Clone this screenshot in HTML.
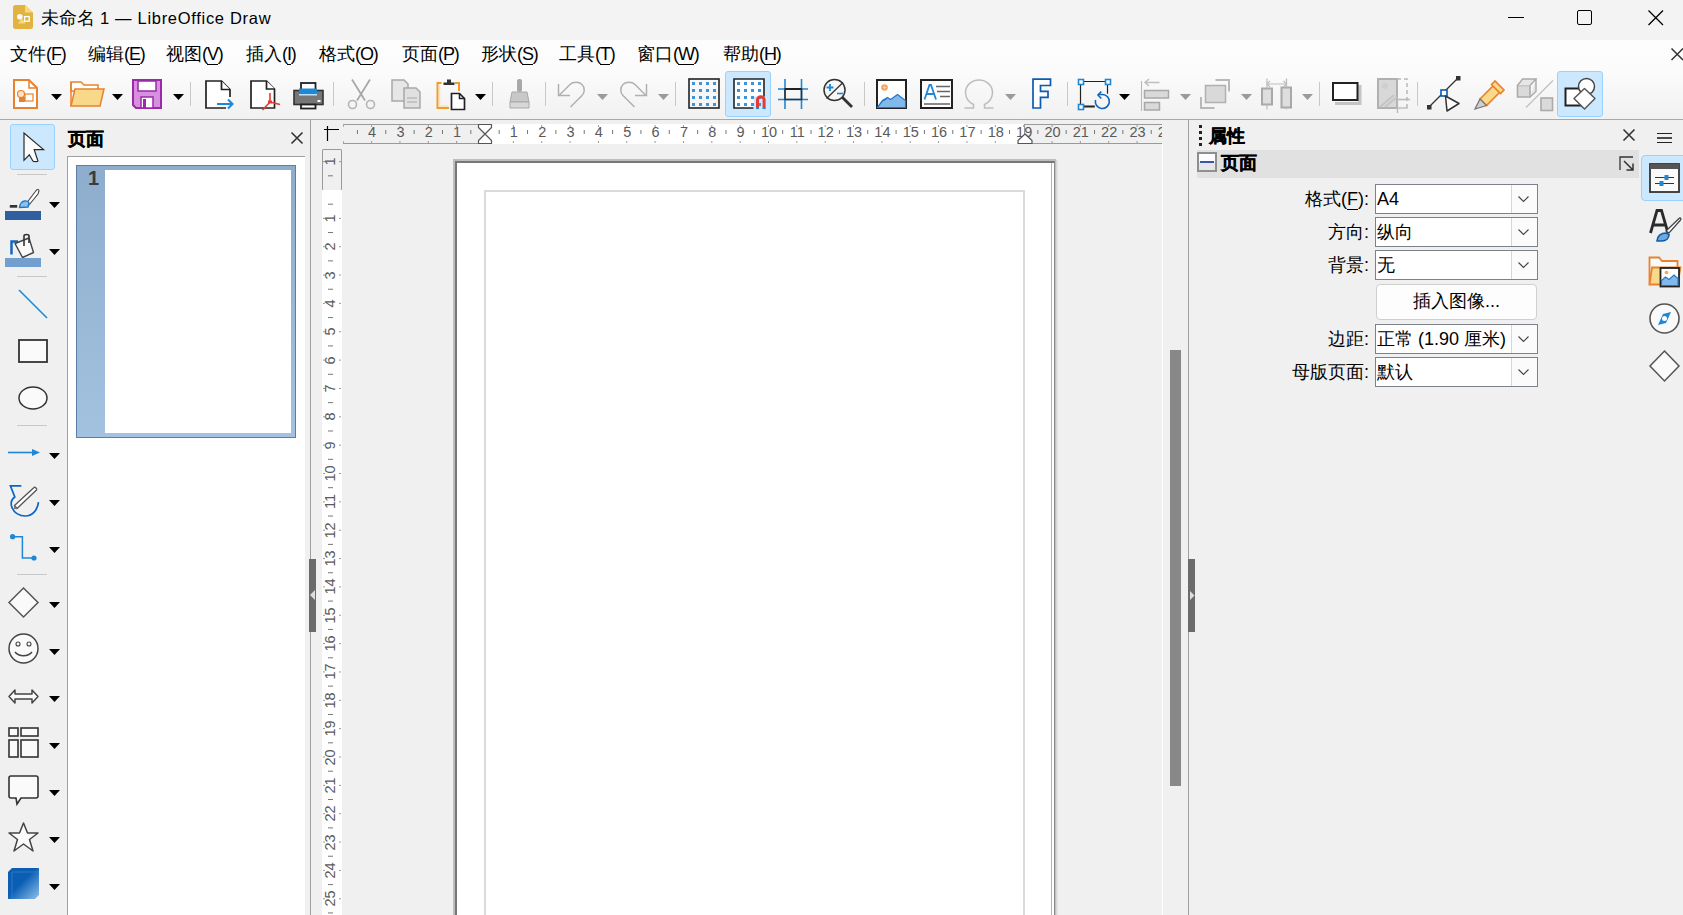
<!DOCTYPE html><html><head><meta charset="utf-8"><style>
*{margin:0;padding:0;box-sizing:border-box}
html,body{width:1683px;height:915px;overflow:hidden;background:#f0f0f0;font-family:"Liberation Sans",sans-serif;color:#000}
.a{position:absolute}
.t{white-space:nowrap;line-height:1}
svg{position:absolute;overflow:visible}
u{text-decoration:none;border-bottom:1px solid #000}
</style></head><body>
<div class="a" style="left:0px;top:0px;width:1683px;height:40px;background:#f3f3f3"></div>
<svg style="left:13px;top:5px" width="20" height="24" viewBox="0 0 20 24"><path d="M2.5 0h9.5l8 7.5v14a2.5 2.5 0 0 1-2.5 2.5h-15A2.5 2.5 0 0 1 0 21.5v-19A2.5 2.5 0 0 1 2.5 0z" fill="#e3b341"/><path d="M12 0v7.5h8z" fill="#f6d97c"/><circle cx="6.8" cy="11.8" r="2.8" fill="#fafafa"/><path d="M5 18.5l3.8-5.5 3.8 5.5z" fill="#f6d97c"/><rect x="11.6" y="11.6" width="4.6" height="4.6" fill="#e3b341" stroke="#fff" stroke-width="1.3"/></svg>
<div class="a t" style="left:41px;top:10px;font-size:17.5px">未命名 <span style="font-size:16.5px;letter-spacing:0.7px">1 — LibreOffice Draw</span></div>
<div class="a" style="left:1508px;top:17px;width:16px;height:1px;background:#000"></div>
<div class="a" style="left:1577px;top:10px;width:15px;height:15px;border:1.3px solid #000;border-radius:2px"></div>
<svg style="left:1648px;top:10px" width="16" height="16" viewBox="0 0 16 16"><path d="M0.5 0.5L15 15M15 0.5L0.5 15" stroke="#000" stroke-width="1.3"/></svg>
<div class="a" style="left:0px;top:40px;width:1683px;height:80px;background:linear-gradient(#fdfdfd 0px,#fbfbfb 32px,#f1f1f1 79px)"></div>
<div class="a" style="left:0px;top:119px;width:1683px;height:1px;background:#a8a8a8"></div>
<div class="a t" style="left:10px;top:45px;font-size:18px">文件<span style="font-size:18px;letter-spacing:-1.1px">(<u>F</u>)</span></div>
<div class="a t" style="left:88px;top:45px;font-size:18px">编辑<span style="font-size:18px;letter-spacing:-1.1px">(<u>E</u>)</span></div>
<div class="a t" style="left:166px;top:45px;font-size:18px">视图<span style="font-size:18px;letter-spacing:-1.1px">(<u>V</u>)</span></div>
<div class="a t" style="left:246px;top:45px;font-size:18px">插入<span style="font-size:18px;letter-spacing:-1.1px">(<u>I</u>)</span></div>
<div class="a t" style="left:319px;top:45px;font-size:18px">格式<span style="font-size:18px;letter-spacing:-1.1px">(<u>O</u>)</span></div>
<div class="a t" style="left:402px;top:45px;font-size:18px">页面<span style="font-size:18px;letter-spacing:-1.1px">(<u>P</u>)</span></div>
<div class="a t" style="left:481px;top:45px;font-size:18px">形状<span style="font-size:18px;letter-spacing:-1.1px">(<u>S</u>)</span></div>
<div class="a t" style="left:559px;top:45px;font-size:18px">工具<span style="font-size:18px;letter-spacing:-1.1px">(<u>T</u>)</span></div>
<div class="a t" style="left:637px;top:45px;font-size:18px">窗口<span style="font-size:18px;letter-spacing:-1.1px">(<u>W</u>)</span></div>
<div class="a t" style="left:723px;top:45px;font-size:18px">帮助<span style="font-size:18px;letter-spacing:-1.1px">(<u>H</u>)</span></div>
<svg style="left:1671px;top:48px" width="13" height="13" viewBox="0 0 13 13"><path d="M0.5 0.5L12 12M12 0.5L0.5 12" stroke="#333" stroke-width="1.5"/></svg>
<svg style="left:13px;top:79px" width="25" height="30" viewBox="0 0 25 30"><path d="M1 1h15l8 8v20H1z" fill="#fff" stroke="#e8822e" stroke-width="2"/><path d="M16 1v8h8" fill="none" stroke="#e8822e" stroke-width="1.5"/><circle cx="8" cy="15" r="3.5" fill="#fbe3cc" stroke="#e8822e" stroke-width="1.2"/><rect x="12" y="15" width="8" height="7" fill="#fff" stroke="#e8822e" stroke-width="1.2"/><path d="M6 18h6v5H6z" fill="#e8822e"/></svg>
<svg style="left:51px;top:94px" width="11" height="6" viewBox="0 0 11 6"><path d="M0 0h11L5.5 6z" fill="#000"/></svg>
<svg style="left:70px;top:81px" width="35" height="27" viewBox="0 0 35 27"><path d="M1 1h10l3 3h14v6H1z" fill="#fff" stroke="#e8822e" stroke-width="1.5"/><path d="M1 25L5 8h29l-4 17z" fill="#f8d98a" stroke="#e8822e" stroke-width="1.5"/><path d="M1 1v24" stroke="#e8822e" stroke-width="1.5"/></svg>
<svg style="left:112px;top:94px" width="11" height="6" viewBox="0 0 11 6"><path d="M0 0h11L5.5 6z" fill="#000"/></svg>
<svg style="left:132px;top:79px" width="30" height="30" viewBox="0 0 30 30"><path d="M1 1h28v28H4l-3-3z" fill="#d88fde" stroke="#9b2aa8" stroke-width="2"/><rect x="6" y="2" width="18" height="10" fill="#fff" stroke="#9b2aa8" stroke-width="1.5"/><rect x="9" y="18" width="12" height="11" fill="#fff" stroke="#9b2aa8" stroke-width="1.5"/><rect x="11" y="20" width="3" height="9" fill="#9b2aa8"/></svg>
<svg style="left:173px;top:94px" width="11" height="6" viewBox="0 0 11 6"><path d="M0 0h11L5.5 6z" fill="#000"/></svg>
<div class="a" style="left:190px;top:82px;width:1px;height:24px;background:#c8c8c8"></div>
<svg style="left:205px;top:80px" width="30" height="30" viewBox="0 0 30 30"><path d="M21 28H1V1h15.5l8.5 8.5V17" fill="#fff" stroke="#222" stroke-width="1.7"/><path d="M16.5 1v8.5H25" fill="#fff" stroke="#222" stroke-width="1.7"/><path d="M12 24h14" stroke="#1e88d6" stroke-width="2"/><path d="M23 19.5l4.5 4.5-4.5 4.5" fill="none" stroke="#1e88d6" stroke-width="2"/></svg>
<svg style="left:250px;top:80px" width="32" height="32" viewBox="0 0 32 32"><path d="M1 1h15.5l8 8v19H1z" fill="#fff" stroke="#222" stroke-width="1.7"/><path d="M16.5 1v8H25" fill="#fff" stroke="#222" stroke-width="1.7"/><path d="M20 13v9M20 22l10 2.5M20 22l-7.5 8" fill="none" stroke="#e53935" stroke-width="1.6"/><path d="M18 20.5h4v3h-4z" fill="#e53935"/></svg>
<svg style="left:293px;top:82px" width="31" height="27" viewBox="0 0 31 27"><rect x="8" y="1" width="14.5" height="9" fill="#fff" stroke="#222" stroke-width="1.8"/><rect x="1" y="8.5" width="29" height="14" fill="#777" stroke="#333" stroke-width="1.6"/><rect x="6" y="6.5" width="18" height="5.5" fill="#1e88d6"/><rect x="6" y="12" width="18" height="1.5" fill="#bfe0f7"/><rect x="8" y="22.5" width="14.5" height="4" fill="#fff" stroke="#222" stroke-width="1.8"/><rect x="24.5" y="18" width="3" height="2" fill="#fff"/></svg>
<div class="a" style="left:333px;top:82px;width:1px;height:24px;background:#c8c8c8"></div>
<svg style="left:347px;top:79px" width="29" height="30" viewBox="0 0 29 30"><path d="M5 0.5l13 21M23 0.5L10 21.5" stroke="#a8a8a8" stroke-width="1.8" fill="none"/><circle cx="5.5" cy="25.5" r="4" fill="none" stroke="#b4b4b4" stroke-width="1.6"/><circle cx="23.5" cy="25.5" r="4" fill="none" stroke="#b4b4b4" stroke-width="1.6"/></svg>
<svg style="left:391px;top:79px" width="30" height="30" viewBox="0 0 30 30"><path d="M1 1h12l4 4v17H1z" fill="#e6e6e6" stroke="#a8a8a8" stroke-width="1.5"/><path d="M13 9h12l4 4v16H13z" fill="#e0e0e0" stroke="#a8a8a8" stroke-width="1.5"/><path d="M16 19h10M16 23h10" stroke="#a8a8a8" stroke-width="1.2"/></svg>
<svg style="left:436px;top:78px" width="31" height="33" viewBox="0 0 31 33"><path d="M1.5 26V5h4" fill="none" stroke="#f29b2a" stroke-width="2"/><path d="M1.5 26v4h11.5" fill="none" stroke="#f29b2a" stroke-width="2"/><path d="M3.5 7v21h9" fill="none" stroke="#fbe3b0" stroke-width="1.5"/><path d="M19 5h4v8" fill="none" stroke="#f29b2a" stroke-width="2"/><path d="M7.5 7h11v-2.5h-3.5v-3h-4v3H7.5z" fill="#333"/><path d="M15.5 15.5h8l5 5v11h-13z" fill="#fff" stroke="#222" stroke-width="1.7"/><path d="M23.5 15.5v5h5" fill="none" stroke="#222" stroke-width="1.5"/></svg>
<svg style="left:475px;top:94px" width="11" height="6" viewBox="0 0 11 6"><path d="M0 0h11L5.5 6z" fill="#000"/></svg>
<div class="a" style="left:492px;top:82px;width:1px;height:24px;background:#c8c8c8"></div>
<svg style="left:508px;top:78px" width="23" height="31" viewBox="0 0 23 31"><rect x="9" y="1" width="5" height="13" rx="2" fill="#a8a8a8"/><path d="M4 14h15l2 10H2z" fill="#c8c8c8" stroke="#a8a8a8"/><path d="M2 24h19v6H2z" fill="#d8d8d8" stroke="#a8a8a8"/></svg>
<div class="a" style="left:545px;top:82px;width:1px;height:24px;background:#c8c8c8"></div>
<svg style="left:557px;top:81px" width="29" height="27" viewBox="0 0 29 27"><path d="M1.5 3v11.5h11.5M2 14.5L13 3.5c3-3 9-3 12 0s3 8 0 11L13.5 26" fill="none" stroke="#b0b0b0" stroke-width="1.5"/></svg>
<svg style="left:597px;top:94px" width="11" height="6" viewBox="0 0 11 6"><path d="M0 0h11L5.5 6z" fill="#9a9a9a"/></svg>
<svg style="left:619px;top:81px" width="29" height="27" viewBox="0 0 29 27"><path d="M27.5 3v11.5H16M27 14.5L16 3.5c-3-3-9-3-12 0s-3 8 0 11L15.5 26" fill="none" stroke="#b0b0b0" stroke-width="1.5"/></svg>
<svg style="left:658px;top:94px" width="11" height="6" viewBox="0 0 11 6"><path d="M0 0h11L5.5 6z" fill="#9a9a9a"/></svg>
<div class="a" style="left:675px;top:82px;width:1px;height:24px;background:#c8c8c8"></div>
<svg style="left:688px;top:78px" width="32" height="31" viewBox="0 0 32 31"><rect x="1" y="1" width="30" height="29" fill="none" stroke="#222" stroke-width="1.6"/><rect x="4" y="4" width="3" height="3" fill="#3c95d8"/><rect x="4" y="11" width="3" height="3" fill="#3c95d8"/><rect x="4" y="18" width="3" height="3" fill="#3c95d8"/><rect x="4" y="25" width="3" height="3" fill="#3c95d8"/><rect x="11" y="4" width="3" height="3" fill="#3c95d8"/><rect x="11" y="11" width="3" height="3" fill="#3c95d8"/><rect x="11" y="18" width="3" height="3" fill="#3c95d8"/><rect x="11" y="25" width="3" height="3" fill="#3c95d8"/><rect x="18" y="4" width="3" height="3" fill="#3c95d8"/><rect x="18" y="11" width="3" height="3" fill="#3c95d8"/><rect x="18" y="18" width="3" height="3" fill="#3c95d8"/><rect x="18" y="25" width="3" height="3" fill="#3c95d8"/><rect x="25" y="4" width="3" height="3" fill="#3c95d8"/><rect x="25" y="11" width="3" height="3" fill="#3c95d8"/><rect x="25" y="18" width="3" height="3" fill="#3c95d8"/><rect x="25" y="25" width="3" height="3" fill="#3c95d8"/></svg>
<div class="a" style="left:725px;top:71px;width:46px;height:46px;background:#cce8ff;border:1px solid #99d1ff;border-radius:3px"></div>
<svg style="left:733px;top:78px" width="33" height="32" viewBox="0 0 33 32"><path d="M1 1h30v17.5H21V30H1z" fill="#fff"/><path d="M31 18.5V1H1v29h19.5" fill="none" stroke="#222" stroke-width="1.6"/><rect x="4" y="4" width="3" height="3" fill="#3c95d8"/><rect x="4" y="11" width="3" height="3" fill="#3c95d8"/><rect x="4" y="18" width="3" height="3" fill="#3c95d8"/><rect x="4" y="25" width="3" height="3" fill="#3c95d8"/><rect x="11" y="4" width="3" height="3" fill="#3c95d8"/><rect x="11" y="11" width="3" height="3" fill="#3c95d8"/><rect x="11" y="18" width="3" height="3" fill="#3c95d8"/><rect x="11" y="25" width="3" height="3" fill="#3c95d8"/><rect x="18" y="4" width="3" height="3" fill="#3c95d8"/><rect x="18" y="11" width="3" height="3" fill="#3c95d8"/><rect x="18" y="18" width="3" height="3" fill="#3c95d8"/><rect x="18" y="25" width="3" height="3" fill="#3c95d8"/><rect x="25" y="4" width="3" height="3" fill="#3c95d8"/><rect x="25" y="11" width="3" height="3" fill="#3c95d8"/><rect x="25" y="18" width="3" height="3" fill="#3c95d8"/><rect x="25" y="25" width="3" height="3" fill="#3c95d8"/><path d="M1 1h0" stroke="none"/><path d="M24.5 30v-8a3.3 3.3 0 0 1 6.6 0v8" fill="none" stroke="#e53935" stroke-width="3"/><rect x="23" y="29.5" width="3" height="1.5" fill="#1e88d6"/><rect x="29.6" y="29.5" width="3" height="1.5" fill="#1e88d6"/></svg>
<svg style="left:778px;top:78px" width="31" height="32" viewBox="0 0 31 32"><path d="M7 1v30M23.5 1v30" stroke="#1e88d6" stroke-width="1.6"/><path d="M0 11h30M0 21.5h30" stroke="#1e88d6" stroke-width="1.6"/><path d="M7 11h16.5v10.5H7z" fill="none" stroke="#333" stroke-width="1.6"/><path d="M7 11h16.5" stroke="#222" stroke-width="2"/></svg>
<svg style="left:823px;top:78px" width="31" height="31" viewBox="0 0 31 31"><circle cx="11.5" cy="12" r="10.5" fill="none" stroke="#333" stroke-width="1.5"/><path d="M3.5 20.5L20 4.5" stroke="#333" stroke-width="1.3"/><path d="M3.5 9.5h7M7 6v7" stroke="#1e88d6" stroke-width="1.8"/><path d="M14 15.5h6" stroke="#1e88d6" stroke-width="1.6"/><path d="M19 19l10 10" stroke="#333" stroke-width="2.8"/></svg>
<div class="a" style="left:864px;top:82px;width:1px;height:24px;background:#c8c8c8"></div>
<svg style="left:876px;top:79px" width="31" height="30" viewBox="0 0 31 30"><rect x="1" y="1" width="29" height="28" fill="#fff" stroke="#222" stroke-width="2"/><path d="M1.5 28.5l5-7 5-3 3 2 7-5 8 6v7z" fill="#82b8ea" stroke="#1e78c8" stroke-width="1.1"/><path d="M1.5 28l5-6 4-2" fill="none" stroke="#1e78c8" stroke-width="1.1"/><circle cx="8.5" cy="8.5" r="3.3" fill="#f6a35b"/><path d="M8.5 6.5v4M6.5 8.5h4" stroke="#fbd3a8" stroke-width="0.8"/></svg>
<svg style="left:920px;top:79px" width="33" height="30" viewBox="0 0 33 30"><rect x="1" y="1" width="31" height="28" fill="#fff" stroke="#222" stroke-width="2"/><path d="M4.5 20.5L9.5 6h1.5l5 14.5M6.5 15h7.5" fill="none" stroke="#1e88d6" stroke-width="1.8"/><path d="M16 7.5h14M17 12.5h13M20 17.5h10M4 25h26" stroke="#666" stroke-width="1.6"/></svg>
<svg style="left:964px;top:79px" width="30" height="30" viewBox="0 0 30 30"><path d="M0.5 29h9v-3.5C4.5 23 1.5 18.5 1.5 13.5 1.5 6.5 7.5 1 15 1s13.5 5.5 13.5 12.5c0 5-3 9.5-8 12V29h9" fill="none" stroke="#bdbdbd" stroke-width="1.5"/></svg>
<svg style="left:1005px;top:94px" width="11" height="6" viewBox="0 0 11 6"><path d="M0 0h11L5.5 6z" fill="#9a9a9a"/></svg>
<svg style="left:1032px;top:78px" width="20" height="32" viewBox="0 0 20 32"><path d="M1 1.2h17.5v6.3H8.5v5.8h7.5v6H8.5v10.7H1z" fill="#fff" stroke="#0b5cb0" stroke-width="1.7"/></svg>
<div class="a" style="left:1067px;top:82px;width:1px;height:24px;background:#c8c8c8"></div>
<svg style="left:1078px;top:79px" width="33" height="31" viewBox="0 0 33 31"><path d="M29.5 14.7V2.5H2.5v24.5" fill="none" stroke="#222" stroke-width="1.2"/><path d="M2.5 27.5h14.3" stroke="#222" stroke-width="2"/><path d="M17.5 21A7 7 0 1 0 24.5 15.5H20.5" fill="none" stroke="#0b66c2" stroke-width="1.6"/><path d="M23.3 12.5L20 16l3.3 3.5" fill="none" stroke="#0b66c2" stroke-width="1.6"/><rect x="0.5" y="0.5" width="5" height="5" fill="#fff" stroke="#1e88d6" stroke-width="1.6"/><rect x="27.5" y="0.5" width="5" height="5" fill="#fff" stroke="#1e88d6" stroke-width="1.6"/><rect x="0.5" y="25.5" width="5" height="5" fill="#fff" stroke="#1e88d6" stroke-width="1.6"/></svg>
<svg style="left:1119px;top:94px" width="11" height="6" viewBox="0 0 11 6"><path d="M0 0h11L5.5 6z" fill="#000"/></svg>
<svg style="left:1141px;top:78px" width="29" height="33" viewBox="0 0 29 33"><path d="M0.5 3v30" stroke="#b8b8b8" stroke-width="1.1"/><path d="M4 4.5h14.5M8 1L4 4.5 8 8" fill="none" stroke="#c0c0c0" stroke-width="1.6"/><rect x="3.5" y="12.5" width="24" height="7.5" fill="#d9d9d9" stroke="#a8a8a8" stroke-width="1.5"/><rect x="3.5" y="24.5" width="15" height="7.5" fill="#d9d9d9" stroke="#a8a8a8" stroke-width="1.5"/></svg>
<svg style="left:1180px;top:94px" width="11" height="6" viewBox="0 0 11 6"><path d="M0 0h11L5.5 6z" fill="#9a9a9a"/></svg>
<svg style="left:1200px;top:79px" width="31" height="30" viewBox="0 0 31 30"><path d="M15.5 1h13.5v11.5" fill="none" stroke="#b8b8b8" stroke-width="2"/><path d="M1 18v11h13.5" fill="none" stroke="#b8b8b8" stroke-width="2"/><rect x="5.5" y="6.5" width="20" height="17" fill="#d9d9d9" stroke="#b0b0b0" stroke-width="1.5"/></svg>
<svg style="left:1241px;top:94px" width="11" height="6" viewBox="0 0 11 6"><path d="M0 0h11L5.5 6z" fill="#9a9a9a"/></svg>
<svg style="left:1261px;top:77px" width="31" height="33" viewBox="0 0 31 33"><rect x="1" y="11.5" width="10" height="16" fill="#dedede" stroke="#a8a8a8" stroke-width="2"/><rect x="20.5" y="10.5" width="9.5" height="20" fill="#dedede" stroke="#a8a8a8" stroke-width="2"/><path d="M6 1.5v10M25.5 1.5v9M6 27.5v5M25.5 30.5v2M6 7h19.5" stroke="#bbb" stroke-width="1.2"/><path d="M9 4L6 7l3 3M22.5 4l3 3-3 3" fill="none" stroke="#bbb" stroke-width="1.1"/></svg>
<svg style="left:1302px;top:94px" width="11" height="6" viewBox="0 0 11 6"><path d="M0 0h11L5.5 6z" fill="#9a9a9a"/></svg>
<div class="a" style="left:1319px;top:82px;width:1px;height:24px;background:#c8c8c8"></div>
<svg style="left:1332px;top:82px" width="31" height="23" viewBox="0 0 31 23"><path d="M26 3h3.5v20H3v-3h23z" fill="#c4c4c4"/><rect x="1" y="1" width="24.5" height="17" fill="#fff" stroke="#222" stroke-width="2"/></svg>
<svg style="left:1377px;top:78px" width="34" height="35" viewBox="0 0 34 35"><rect x="1" y="1" width="19" height="29" fill="#d8d8d8" stroke="#b0b0b0" stroke-width="2"/><path d="M20 1h10v29" fill="none" stroke="#b8b8b8" stroke-width="1.5" stroke-dasharray="4 3"/><circle cx="8" cy="8" r="3" fill="#cfcfcf"/><path d="M3 29l14-12M8 29l12-10" stroke="#c4c4c4" stroke-width="2"/><path d="M20 21.5h13M20.5 21v14" stroke="#b8b8b8" stroke-width="1.3"/><path d="M20.5 30h10" stroke="#b8b8b8" stroke-width="1.3"/></svg>
<div class="a" style="left:1417px;top:82px;width:1px;height:24px;background:#c8c8c8"></div>
<svg style="left:1427px;top:76px" width="34" height="37" viewBox="0 0 34 37"><path d="M2 31L31 2" stroke="#333" stroke-width="1.3"/><rect x="0" y="29" width="4.5" height="4.5" fill="#333"/><rect x="29" y="0" width="4.5" height="4.5" fill="#333"/><rect x="14" y="14" width="6" height="6" fill="#fff" stroke="#0b5cb0" stroke-width="1.6"/><path d="M18.5 20l1.5 15 12-7.5z" fill="#fff" stroke="#333" stroke-width="1.5" stroke-linejoin="round"/></svg>
<svg style="left:1474px;top:78px" width="32" height="33" viewBox="0 0 32 33"><path d="M6 21L19 8l6.5 6.5-13 13z" fill="#f8d98a" stroke="#e8822e" stroke-width="1.6"/><path d="M17.5 6.5l3.5-3.5 9 9-3.5 3.5z" fill="#f8d98a" stroke="#e8822e" stroke-width="1.6"/><path d="M6 21l-5 10 11.5-3.5z" fill="#cfcfcf" stroke="#777" stroke-width="1.3"/></svg>
<svg style="left:1516px;top:78px" width="38" height="34" viewBox="0 0 38 34"><path d="M1.5 7.5h12.5v11.5H1.5z" fill="#dadada" stroke="#aaa" stroke-width="1.6"/><path d="M1.5 7.5l5-6.5h13.5l-6 6.5M14 19l6-5.5V1" fill="#e6e6e6" stroke="#aaa" stroke-width="1.4"/><path d="M10 29.5L37 2.5" stroke="#c0c0c0" stroke-width="1.3"/><rect x="25" y="20" width="11.5" height="12.5" fill="#dadada" stroke="#aaa" stroke-width="1.6"/></svg>
<div class="a" style="left:1557px;top:71px;width:46px;height:46px;background:#cce8ff;border:1px solid #99d1ff;border-radius:3px"></div>
<svg style="left:1564px;top:78px" width="32" height="32" viewBox="0 0 32 32"><rect x="1.5" y="10.5" width="16" height="17" fill="#fff" stroke="#222" stroke-width="2"/><circle cx="22.5" cy="8.5" r="8" fill="#fff" stroke="#444" stroke-width="1.5"/><path d="M20.5 10.5l10.5 10-10.5 10.5-10.5-10.5z" fill="#fff" stroke="#555" stroke-width="1.5" stroke-linejoin="round"/></svg>
<div class="a" style="left:10px;top:124px;width:45px;height:46px;background:#cce8ff;border:1px solid #99d1ff;border-radius:3px"></div>
<svg style="left:23px;top:132px" width="22" height="31" viewBox="0 0 22 31"><path d="M1 1V28.3L6.3 22.8 10 29.2c0.5 0.6 4.5 0.6 5 0L11.2 17.6H20.6z" fill="#fbfbfb" stroke="#2a2a2a" stroke-width="1.2"/></svg>
<div class="a" style="left:17px;top:174px;width:30px;height:1px;background:#c8c8c8"></div>
<svg style="left:5px;top:188px" width="36" height="32" viewBox="0 0 36 32"><rect x="4.8" y="17" width="7.4" height="2.7" fill="#333"/><path d="M22 14.5L31.5 2c1-1 2.5-0.5 2.5 1l-1 3-9 11z" fill="#fff" stroke="#444" stroke-width="1.1"/><path d="M14.5 19.5c0-3 2-6 5-6.5 2-0.3 4 0.5 4.5 2l-1 4z" fill="#8fc0ea" stroke="#1e78c8" stroke-width="1.4"/><rect x="0" y="23" width="36" height="9" fill="#2f5f9f"/></svg>
<svg style="left:49px;top:202px" width="11" height="6" viewBox="0 0 11 6"><path d="M0 0h11L5.5 6z" fill="#000"/></svg>
<svg style="left:5px;top:233px" width="36" height="34" viewBox="0 0 36 34"><path d="M6.5 21.5V8.5h6.5" fill="none" stroke="#1565c0" stroke-width="2.5"/><path d="M10 10.5l14-5.5 4.5 14.5-11 5z" fill="#fafafa" stroke="#444" stroke-width="1.4" stroke-linejoin="round"/><path d="M19 13V3c0-2 5-2 5 0v7" fill="none" stroke="#333" stroke-width="1.6"/><rect x="0" y="25" width="36" height="9" fill="#729fcf"/></svg>
<svg style="left:49px;top:249px" width="11" height="6" viewBox="0 0 11 6"><path d="M0 0h11L5.5 6z" fill="#000"/></svg>
<div class="a" style="left:17px;top:276px;width:30px;height:1px;background:#c8c8c8"></div>
<svg style="left:18px;top:289px" width="30" height="30" viewBox="0 0 30 30"><path d="M1 1L29 29" stroke="#1e88d6" stroke-width="1.6"/></svg>
<svg style="left:18px;top:339px" width="30" height="24" viewBox="0 0 30 24"><rect x="1" y="1" width="28" height="22" fill="#fafafa" stroke="#333" stroke-width="1.8"/></svg>
<svg style="left:18px;top:386px" width="30" height="24" viewBox="0 0 30 24"><ellipse cx="15" cy="12" rx="14" ry="11" fill="#fafafa" stroke="#333" stroke-width="1.5"/></svg>
<div class="a" style="left:17px;top:425px;width:30px;height:1px;background:#c8c8c8"></div>
<svg style="left:8px;top:449px" width="32" height="7" viewBox="0 0 32 7"><path d="M0 3.5h26" stroke="#1e88d6" stroke-width="1.6"/><path d="M24 0l8 3.5-8 3.5z" fill="#1e88d6"/></svg>
<svg style="left:49px;top:453px" width="11" height="6" viewBox="0 0 11 6"><path d="M0 0h11L5.5 6z" fill="#000"/></svg>
<svg style="left:9px;top:484px" width="32" height="34" viewBox="0 0 32 34"><path d="M12.3 1.8H1.4L5.8 13C3 15 1.5 18 2.5 22c2 7 8 10 14 10s12-5 13-13.8" fill="none" stroke="#0b66c2" stroke-width="1.7"/><path d="M5.5 21.5L25 3.5c1-1 3.5 1.5 2.5 2.5L8 24.5z" fill="#fff" stroke="#555" stroke-width="1.3"/><path d="M5.5 21.5L8 24.5 4.5 25.5z" fill="#777"/></svg>
<svg style="left:49px;top:500px" width="11" height="6" viewBox="0 0 11 6"><path d="M0 0h11L5.5 6z" fill="#000"/></svg>
<svg style="left:10px;top:534px" width="28" height="28" viewBox="0 0 28 28"><path d="M2.6 2.7h9.8v21.3h11.6" fill="none" stroke="#1e88d6" stroke-width="1.5"/><circle cx="2.6" cy="2.7" r="2.6" fill="#1e88d6"/><circle cx="24" cy="24" r="2.6" fill="#1e88d6"/></svg>
<svg style="left:49px;top:547px" width="11" height="6" viewBox="0 0 11 6"><path d="M0 0h11L5.5 6z" fill="#000"/></svg>
<div class="a" style="left:17px;top:574px;width:30px;height:1px;background:#c8c8c8"></div>
<svg style="left:8px;top:587px" width="31" height="31" viewBox="0 0 31 31"><path d="M15.5 1L30 15.5 15.5 30 1 15.5z" fill="#fafafa" stroke="#555" stroke-width="1.5"/></svg>
<svg style="left:49px;top:602px" width="11" height="6" viewBox="0 0 11 6"><path d="M0 0h11L5.5 6z" fill="#000"/></svg>
<svg style="left:8px;top:633px" width="31" height="31" viewBox="0 0 31 31"><circle cx="15.5" cy="15.5" r="14.5" fill="#fafafa" stroke="#444" stroke-width="1.5"/><circle cx="10" cy="11" r="2" fill="none" stroke="#444" stroke-width="1.1"/><circle cx="21" cy="11" r="2" fill="none" stroke="#444" stroke-width="1.1"/><path d="M7 19c4 5 13 5 17 0" fill="none" stroke="#444" stroke-width="1.5"/></svg>
<svg style="left:49px;top:649px" width="11" height="6" viewBox="0 0 11 6"><path d="M0 0h11L5.5 6z" fill="#000"/></svg>
<svg style="left:8px;top:688px" width="31" height="17" viewBox="0 0 31 17"><path d="M1 8.5L7 2v4h17V2l6 6.5-6 6.5v-4H7v4z" fill="#fafafa" stroke="#444" stroke-width="1.5" stroke-linejoin="round"/></svg>
<svg style="left:49px;top:696px" width="11" height="6" viewBox="0 0 11 6"><path d="M0 0h11L5.5 6z" fill="#000"/></svg>
<svg style="left:8px;top:727px" width="31" height="31" viewBox="0 0 31 31"><rect x="1" y="1" width="9" height="8" fill="#fafafa" stroke="#333" stroke-width="1.6"/><rect x="13" y="1" width="17" height="8" fill="#fafafa" stroke="#333" stroke-width="1.6"/><rect x="1" y="13" width="9" height="17" fill="#fafafa" stroke="#333" stroke-width="1.6"/><rect x="13" y="13" width="17" height="17" fill="#fafafa" stroke="#333" stroke-width="1.6"/></svg>
<svg style="left:49px;top:743px" width="11" height="6" viewBox="0 0 11 6"><path d="M0 0h11L5.5 6z" fill="#000"/></svg>
<svg style="left:8px;top:775px" width="31" height="30" viewBox="0 0 31 30"><path d="M3 1h25a2 2 0 0 1 2 2v18a2 2 0 0 1-2 2H13l-4 6-1-6H3a2 2 0 0 1-2-2V3a2 2 0 0 1 2-2z" fill="#fafafa" stroke="#333" stroke-width="1.6"/></svg>
<svg style="left:49px;top:790px" width="11" height="6" viewBox="0 0 11 6"><path d="M0 0h11L5.5 6z" fill="#000"/></svg>
<svg style="left:8px;top:822px" width="31" height="30" viewBox="0 0 31 30"><path d="M15.5 1l4 10h10.5l-8.5 6.5 3.5 11.5-9.5-7-9.5 7 3.5-11.5L1 11h10.5z" fill="#fafafa" stroke="#444" stroke-width="1.5" stroke-linejoin="round"/></svg>
<svg style="left:49px;top:837px" width="11" height="6" viewBox="0 0 11 6"><path d="M0 0h11L5.5 6z" fill="#000"/></svg>
<svg style="left:8px;top:868px" width="31" height="31" viewBox="0 0 31 31"><defs><linearGradient id="cg" x1="0" y1="0" x2="1" y2="1"><stop offset="0.45" stop-color="#0a5fb4"/><stop offset="1" stop-color="#8fc0ea"/></linearGradient></defs><path d="M4 0h27v27l-4 4H0V4z" fill="url(#cg)"/><path d="M4 4h27M4 4v27" stroke="#3a7cc6" stroke-width="0.8" fill="none"/></svg>
<svg style="left:49px;top:884px" width="11" height="6" viewBox="0 0 11 6"><path d="M0 0h11L5.5 6z" fill="#000"/></svg>
<div class="a t" style="left:68px;top:130px;font-size:18px;"><b style="-webkit-text-stroke:0.35px #000">页面</b></div>
<svg style="left:291px;top:132px" width="12" height="12" viewBox="0 0 12 12"><path d="M0.5 0.5L11.5 11.5M11.5 0.5L0.5 11.5" stroke="#333" stroke-width="1.6"/></svg>
<div class="a" style="left:67px;top:156px;width:238px;height:759px;background:#fff;border-top:1px solid #a0a0a0;border-left:1px solid #a0a0a0"></div>
<div class="a" style="left:76px;top:165px;width:220px;height:273px;background:linear-gradient(#8eaccb,#a3c2e0);border:1px solid #5b7ea6"></div>
<div class="a" style="left:105px;top:170px;width:186px;height:263px;background:#fff"></div>
<div class="a t" style="left:88px;top:168px;font-size:20px;color:#3a3a3a"><b>1</b></div>
<div class="a" style="left:310px;top:120px;width:1px;height:795px;background:#a0a0a0"></div>
<div class="a" style="left:309px;top:559px;width:7px;height:73px;background:#6b6b6b"></div>
<svg style="left:309px;top:590px" width="7" height="10" viewBox="0 0 7 10"><path d="M6 0v10L1 5z" fill="#ddd"/></svg>
<svg style="left:324px;top:126px" width="16" height="16" viewBox="0 0 16 16"><path d="M3.5 0v15M0 3.5h15" stroke="#000" stroke-width="1.2"/></svg>
<div class="a" style="left:343px;top:124px;width:142px;height:20px;border-top:1px solid #9a9a9a;border-bottom:1px solid #9a9a9a"></div>
<div class="a" style="left:485px;top:124px;width:539px;height:20px;background:#fff"></div>
<div class="a" style="left:1024px;top:124px;width:138px;height:20px;border-top:1px solid #9a9a9a;border-bottom:1px solid #9a9a9a;border-left:1px solid #9a9a9a"></div>
<svg style="left:343px;top:124px;overflow:hidden" width="819" height="20" viewBox="0 0 819 20"><rect x="-0.25" y="1" width="1" height="2" fill="#999"/><rect x="-0.25" y="17" width="1" height="2" fill="#999"/><rect x="13.93" y="6" width="1" height="4" fill="#777"/><rect x="28.10" y="1" width="1" height="2" fill="#999"/><rect x="28.10" y="17" width="1" height="2" fill="#999"/><rect x="42.27" y="6" width="1" height="4" fill="#777"/><rect x="56.45" y="1" width="1" height="2" fill="#999"/><rect x="56.45" y="17" width="1" height="2" fill="#999"/><rect x="70.62" y="6" width="1" height="4" fill="#777"/><rect x="84.80" y="1" width="1" height="2" fill="#999"/><rect x="84.80" y="17" width="1" height="2" fill="#999"/><rect x="98.98" y="6" width="1" height="4" fill="#777"/><rect x="113.15" y="1" width="1" height="2" fill="#999"/><rect x="113.15" y="17" width="1" height="2" fill="#999"/><rect x="127.32" y="6" width="1" height="4" fill="#777"/><rect x="155.68" y="6" width="1" height="4" fill="#777"/><rect x="169.85" y="1" width="1" height="2" fill="#999"/><rect x="169.85" y="17" width="1" height="2" fill="#999"/><rect x="184.02" y="6" width="1" height="4" fill="#777"/><rect x="198.20" y="1" width="1" height="2" fill="#999"/><rect x="198.20" y="17" width="1" height="2" fill="#999"/><rect x="212.38" y="6" width="1" height="4" fill="#777"/><rect x="226.55" y="1" width="1" height="2" fill="#999"/><rect x="226.55" y="17" width="1" height="2" fill="#999"/><rect x="240.73" y="6" width="1" height="4" fill="#777"/><rect x="254.90" y="1" width="1" height="2" fill="#999"/><rect x="254.90" y="17" width="1" height="2" fill="#999"/><rect x="269.08" y="6" width="1" height="4" fill="#777"/><rect x="283.25" y="1" width="1" height="2" fill="#999"/><rect x="283.25" y="17" width="1" height="2" fill="#999"/><rect x="297.42" y="6" width="1" height="4" fill="#777"/><rect x="311.60" y="1" width="1" height="2" fill="#999"/><rect x="311.60" y="17" width="1" height="2" fill="#999"/><rect x="325.77" y="6" width="1" height="4" fill="#777"/><rect x="339.95" y="1" width="1" height="2" fill="#999"/><rect x="339.95" y="17" width="1" height="2" fill="#999"/><rect x="354.12" y="6" width="1" height="4" fill="#777"/><rect x="368.30" y="1" width="1" height="2" fill="#999"/><rect x="368.30" y="17" width="1" height="2" fill="#999"/><rect x="382.48" y="6" width="1" height="4" fill="#777"/><rect x="396.65" y="1" width="1" height="2" fill="#999"/><rect x="396.65" y="17" width="1" height="2" fill="#999"/><rect x="410.83" y="6" width="1" height="4" fill="#777"/><rect x="425.00" y="1" width="1" height="2" fill="#999"/><rect x="425.00" y="17" width="1" height="2" fill="#999"/><rect x="439.17" y="6" width="1" height="4" fill="#777"/><rect x="453.35" y="1" width="1" height="2" fill="#999"/><rect x="453.35" y="17" width="1" height="2" fill="#999"/><rect x="467.53" y="6" width="1" height="4" fill="#777"/><rect x="481.70" y="1" width="1" height="2" fill="#999"/><rect x="481.70" y="17" width="1" height="2" fill="#999"/><rect x="495.88" y="6" width="1" height="4" fill="#777"/><rect x="510.05" y="1" width="1" height="2" fill="#999"/><rect x="510.05" y="17" width="1" height="2" fill="#999"/><rect x="524.23" y="6" width="1" height="4" fill="#777"/><rect x="538.40" y="1" width="1" height="2" fill="#999"/><rect x="538.40" y="17" width="1" height="2" fill="#999"/><rect x="552.58" y="6" width="1" height="4" fill="#777"/><rect x="566.75" y="1" width="1" height="2" fill="#999"/><rect x="566.75" y="17" width="1" height="2" fill="#999"/><rect x="580.92" y="6" width="1" height="4" fill="#777"/><rect x="595.10" y="1" width="1" height="2" fill="#999"/><rect x="595.10" y="17" width="1" height="2" fill="#999"/><rect x="609.28" y="6" width="1" height="4" fill="#777"/><rect x="623.45" y="1" width="1" height="2" fill="#999"/><rect x="623.45" y="17" width="1" height="2" fill="#999"/><rect x="637.62" y="6" width="1" height="4" fill="#777"/><rect x="651.80" y="1" width="1" height="2" fill="#999"/><rect x="651.80" y="17" width="1" height="2" fill="#999"/><rect x="665.98" y="6" width="1" height="4" fill="#777"/><rect x="680.15" y="1" width="1" height="2" fill="#999"/><rect x="680.15" y="17" width="1" height="2" fill="#999"/><rect x="694.33" y="6" width="1" height="4" fill="#777"/><rect x="708.50" y="1" width="1" height="2" fill="#999"/><rect x="708.50" y="17" width="1" height="2" fill="#999"/><rect x="722.68" y="6" width="1" height="4" fill="#777"/><rect x="736.85" y="1" width="1" height="2" fill="#999"/><rect x="736.85" y="17" width="1" height="2" fill="#999"/><rect x="751.03" y="6" width="1" height="4" fill="#777"/><rect x="765.20" y="1" width="1" height="2" fill="#999"/><rect x="765.20" y="17" width="1" height="2" fill="#999"/><rect x="779.38" y="6" width="1" height="4" fill="#777"/><rect x="793.55" y="1" width="1" height="2" fill="#999"/><rect x="793.55" y="17" width="1" height="2" fill="#999"/><rect x="807.72" y="6" width="1" height="4" fill="#777"/></svg>
<div class="a t" style="left:332.10px;top:125px;width:80px;text-align:center;font-size:14.5px;color:#5a5a5a">4</div>
<div class="a t" style="left:360.45px;top:125px;width:80px;text-align:center;font-size:14.5px;color:#5a5a5a">3</div>
<div class="a t" style="left:388.80px;top:125px;width:80px;text-align:center;font-size:14.5px;color:#5a5a5a">2</div>
<div class="a t" style="left:417.15px;top:125px;width:80px;text-align:center;font-size:14.5px;color:#5a5a5a">1</div>
<div class="a t" style="left:473.85px;top:125px;width:80px;text-align:center;font-size:14.5px;color:#5a5a5a">1</div>
<div class="a t" style="left:502.20px;top:125px;width:80px;text-align:center;font-size:14.5px;color:#5a5a5a">2</div>
<div class="a t" style="left:530.55px;top:125px;width:80px;text-align:center;font-size:14.5px;color:#5a5a5a">3</div>
<div class="a t" style="left:558.90px;top:125px;width:80px;text-align:center;font-size:14.5px;color:#5a5a5a">4</div>
<div class="a t" style="left:587.25px;top:125px;width:80px;text-align:center;font-size:14.5px;color:#5a5a5a">5</div>
<div class="a t" style="left:615.60px;top:125px;width:80px;text-align:center;font-size:14.5px;color:#5a5a5a">6</div>
<div class="a t" style="left:643.95px;top:125px;width:80px;text-align:center;font-size:14.5px;color:#5a5a5a">7</div>
<div class="a t" style="left:672.30px;top:125px;width:80px;text-align:center;font-size:14.5px;color:#5a5a5a">8</div>
<div class="a t" style="left:700.65px;top:125px;width:80px;text-align:center;font-size:14.5px;color:#5a5a5a">9</div>
<div class="a t" style="left:729.00px;top:125px;width:80px;text-align:center;font-size:14.5px;color:#5a5a5a">10</div>
<div class="a t" style="left:757.35px;top:125px;width:80px;text-align:center;font-size:14.5px;color:#5a5a5a">11</div>
<div class="a t" style="left:785.70px;top:125px;width:80px;text-align:center;font-size:14.5px;color:#5a5a5a">12</div>
<div class="a t" style="left:814.05px;top:125px;width:80px;text-align:center;font-size:14.5px;color:#5a5a5a">13</div>
<div class="a t" style="left:842.40px;top:125px;width:80px;text-align:center;font-size:14.5px;color:#5a5a5a">14</div>
<div class="a t" style="left:870.75px;top:125px;width:80px;text-align:center;font-size:14.5px;color:#5a5a5a">15</div>
<div class="a t" style="left:899.10px;top:125px;width:80px;text-align:center;font-size:14.5px;color:#5a5a5a">16</div>
<div class="a t" style="left:927.45px;top:125px;width:80px;text-align:center;font-size:14.5px;color:#5a5a5a">17</div>
<div class="a t" style="left:955.80px;top:125px;width:80px;text-align:center;font-size:14.5px;color:#5a5a5a">18</div>
<div class="a t" style="left:984.15px;top:125px;width:80px;text-align:center;font-size:14.5px;color:#5a5a5a">19</div>
<div class="a t" style="left:1012.50px;top:125px;width:80px;text-align:center;font-size:14.5px;color:#5a5a5a">20</div>
<div class="a t" style="left:1040.85px;top:125px;width:80px;text-align:center;font-size:14.5px;color:#5a5a5a">21</div>
<div class="a t" style="left:1069.20px;top:125px;width:80px;text-align:center;font-size:14.5px;color:#5a5a5a">22</div>
<div class="a t" style="left:1097.55px;top:125px;width:80px;text-align:center;font-size:14.5px;color:#5a5a5a">23</div>
<div class="a t" style="left:1125.90px;top:125px;width:80px;text-align:center;font-size:14.5px;color:#5a5a5a">24</div>
<div class="a" style="left:1162px;top:121px;width:26px;height:26px;background:#f0f0f0"></div>
<svg style="left:477px;top:123px" width="17" height="22" viewBox="0 0 17 22"><path d="M1.5 1.5h13v3L8 11l6.5 6.5v3h-13v-3L8 11 1.5 4.5z" fill="#fff" stroke="#555" stroke-width="1.2" stroke-linejoin="round"/></svg>
<svg style="left:1017px;top:133px" width="16" height="12" viewBox="0 0 16 12"><path d="M1 10.5v-3L8 1l7 6.5v3z" fill="#fff" stroke="#555" stroke-width="1.2" stroke-linejoin="round"/></svg>
<div class="a" style="left:322px;top:149px;width:20px;height:42px;border:1px solid #9a9a9a;border-radius:1px"></div>
<div class="a" style="left:322px;top:190px;width:20px;height:725px;background:#fff"></div>
<svg style="left:322px;top:149px;overflow:hidden" width="20" height="766" viewBox="0 0 20 766"><rect x="1" y="12.15" width="2" height="1" fill="#999"/><rect x="17" y="12.15" width="2" height="1" fill="#999"/><rect x="6" y="26.32" width="5" height="1" fill="#777"/><rect x="6" y="54.68" width="5" height="1" fill="#777"/><rect x="1" y="68.85" width="2" height="1" fill="#999"/><rect x="17" y="68.85" width="2" height="1" fill="#999"/><rect x="6" y="83.03" width="5" height="1" fill="#777"/><rect x="1" y="97.20" width="2" height="1" fill="#999"/><rect x="17" y="97.20" width="2" height="1" fill="#999"/><rect x="6" y="111.38" width="5" height="1" fill="#777"/><rect x="1" y="125.55" width="2" height="1" fill="#999"/><rect x="17" y="125.55" width="2" height="1" fill="#999"/><rect x="6" y="139.73" width="5" height="1" fill="#777"/><rect x="1" y="153.90" width="2" height="1" fill="#999"/><rect x="17" y="153.90" width="2" height="1" fill="#999"/><rect x="6" y="168.07" width="5" height="1" fill="#777"/><rect x="1" y="182.25" width="2" height="1" fill="#999"/><rect x="17" y="182.25" width="2" height="1" fill="#999"/><rect x="6" y="196.43" width="5" height="1" fill="#777"/><rect x="1" y="210.60" width="2" height="1" fill="#999"/><rect x="17" y="210.60" width="2" height="1" fill="#999"/><rect x="6" y="224.77" width="5" height="1" fill="#777"/><rect x="1" y="238.95" width="2" height="1" fill="#999"/><rect x="17" y="238.95" width="2" height="1" fill="#999"/><rect x="6" y="253.12" width="5" height="1" fill="#777"/><rect x="1" y="267.30" width="2" height="1" fill="#999"/><rect x="17" y="267.30" width="2" height="1" fill="#999"/><rect x="6" y="281.48" width="5" height="1" fill="#777"/><rect x="1" y="295.65" width="2" height="1" fill="#999"/><rect x="17" y="295.65" width="2" height="1" fill="#999"/><rect x="6" y="309.82" width="5" height="1" fill="#777"/><rect x="1" y="324.00" width="2" height="1" fill="#999"/><rect x="17" y="324.00" width="2" height="1" fill="#999"/><rect x="6" y="338.18" width="5" height="1" fill="#777"/><rect x="1" y="352.35" width="2" height="1" fill="#999"/><rect x="17" y="352.35" width="2" height="1" fill="#999"/><rect x="6" y="366.53" width="5" height="1" fill="#777"/><rect x="1" y="380.70" width="2" height="1" fill="#999"/><rect x="17" y="380.70" width="2" height="1" fill="#999"/><rect x="6" y="394.88" width="5" height="1" fill="#777"/><rect x="1" y="409.05" width="2" height="1" fill="#999"/><rect x="17" y="409.05" width="2" height="1" fill="#999"/><rect x="6" y="423.23" width="5" height="1" fill="#777"/><rect x="1" y="437.40" width="2" height="1" fill="#999"/><rect x="17" y="437.40" width="2" height="1" fill="#999"/><rect x="6" y="451.58" width="5" height="1" fill="#777"/><rect x="1" y="465.75" width="2" height="1" fill="#999"/><rect x="17" y="465.75" width="2" height="1" fill="#999"/><rect x="6" y="479.92" width="5" height="1" fill="#777"/><rect x="1" y="494.10" width="2" height="1" fill="#999"/><rect x="17" y="494.10" width="2" height="1" fill="#999"/><rect x="6" y="508.28" width="5" height="1" fill="#777"/><rect x="1" y="522.45" width="2" height="1" fill="#999"/><rect x="17" y="522.45" width="2" height="1" fill="#999"/><rect x="6" y="536.62" width="5" height="1" fill="#777"/><rect x="1" y="550.80" width="2" height="1" fill="#999"/><rect x="17" y="550.80" width="2" height="1" fill="#999"/><rect x="6" y="564.98" width="5" height="1" fill="#777"/><rect x="1" y="579.15" width="2" height="1" fill="#999"/><rect x="17" y="579.15" width="2" height="1" fill="#999"/><rect x="6" y="593.33" width="5" height="1" fill="#777"/><rect x="1" y="607.50" width="2" height="1" fill="#999"/><rect x="17" y="607.50" width="2" height="1" fill="#999"/><rect x="6" y="621.68" width="5" height="1" fill="#777"/><rect x="1" y="635.85" width="2" height="1" fill="#999"/><rect x="17" y="635.85" width="2" height="1" fill="#999"/><rect x="6" y="650.02" width="5" height="1" fill="#777"/><rect x="1" y="664.20" width="2" height="1" fill="#999"/><rect x="17" y="664.20" width="2" height="1" fill="#999"/><rect x="6" y="678.38" width="5" height="1" fill="#777"/><rect x="1" y="692.55" width="2" height="1" fill="#999"/><rect x="17" y="692.55" width="2" height="1" fill="#999"/><rect x="6" y="706.73" width="5" height="1" fill="#777"/><rect x="1" y="720.90" width="2" height="1" fill="#999"/><rect x="17" y="720.90" width="2" height="1" fill="#999"/><rect x="6" y="735.08" width="5" height="1" fill="#777"/><rect x="1" y="749.25" width="2" height="1" fill="#999"/><rect x="17" y="749.25" width="2" height="1" fill="#999"/><rect x="6" y="763.43" width="5" height="1" fill="#777"/></svg>
<div class="a t" style="left:290px;top:154.15px;width:80px;height:15px;text-align:center;font-size:14.5px;color:#5a5a5a;transform:rotate(-90deg)">1</div>
<div class="a t" style="left:290px;top:210.85px;width:80px;height:15px;text-align:center;font-size:14.5px;color:#5a5a5a;transform:rotate(-90deg)">1</div>
<div class="a t" style="left:290px;top:239.20px;width:80px;height:15px;text-align:center;font-size:14.5px;color:#5a5a5a;transform:rotate(-90deg)">2</div>
<div class="a t" style="left:290px;top:267.55px;width:80px;height:15px;text-align:center;font-size:14.5px;color:#5a5a5a;transform:rotate(-90deg)">3</div>
<div class="a t" style="left:290px;top:295.90px;width:80px;height:15px;text-align:center;font-size:14.5px;color:#5a5a5a;transform:rotate(-90deg)">4</div>
<div class="a t" style="left:290px;top:324.25px;width:80px;height:15px;text-align:center;font-size:14.5px;color:#5a5a5a;transform:rotate(-90deg)">5</div>
<div class="a t" style="left:290px;top:352.60px;width:80px;height:15px;text-align:center;font-size:14.5px;color:#5a5a5a;transform:rotate(-90deg)">6</div>
<div class="a t" style="left:290px;top:380.95px;width:80px;height:15px;text-align:center;font-size:14.5px;color:#5a5a5a;transform:rotate(-90deg)">7</div>
<div class="a t" style="left:290px;top:409.30px;width:80px;height:15px;text-align:center;font-size:14.5px;color:#5a5a5a;transform:rotate(-90deg)">8</div>
<div class="a t" style="left:290px;top:437.65px;width:80px;height:15px;text-align:center;font-size:14.5px;color:#5a5a5a;transform:rotate(-90deg)">9</div>
<div class="a t" style="left:290px;top:466.00px;width:80px;height:15px;text-align:center;font-size:14.5px;color:#5a5a5a;transform:rotate(-90deg)">10</div>
<div class="a t" style="left:290px;top:494.35px;width:80px;height:15px;text-align:center;font-size:14.5px;color:#5a5a5a;transform:rotate(-90deg)">11</div>
<div class="a t" style="left:290px;top:522.70px;width:80px;height:15px;text-align:center;font-size:14.5px;color:#5a5a5a;transform:rotate(-90deg)">12</div>
<div class="a t" style="left:290px;top:551.05px;width:80px;height:15px;text-align:center;font-size:14.5px;color:#5a5a5a;transform:rotate(-90deg)">13</div>
<div class="a t" style="left:290px;top:579.40px;width:80px;height:15px;text-align:center;font-size:14.5px;color:#5a5a5a;transform:rotate(-90deg)">14</div>
<div class="a t" style="left:290px;top:607.75px;width:80px;height:15px;text-align:center;font-size:14.5px;color:#5a5a5a;transform:rotate(-90deg)">15</div>
<div class="a t" style="left:290px;top:636.10px;width:80px;height:15px;text-align:center;font-size:14.5px;color:#5a5a5a;transform:rotate(-90deg)">16</div>
<div class="a t" style="left:290px;top:664.45px;width:80px;height:15px;text-align:center;font-size:14.5px;color:#5a5a5a;transform:rotate(-90deg)">17</div>
<div class="a t" style="left:290px;top:692.80px;width:80px;height:15px;text-align:center;font-size:14.5px;color:#5a5a5a;transform:rotate(-90deg)">18</div>
<div class="a t" style="left:290px;top:721.15px;width:80px;height:15px;text-align:center;font-size:14.5px;color:#5a5a5a;transform:rotate(-90deg)">19</div>
<div class="a t" style="left:290px;top:749.50px;width:80px;height:15px;text-align:center;font-size:14.5px;color:#5a5a5a;transform:rotate(-90deg)">20</div>
<div class="a t" style="left:290px;top:777.85px;width:80px;height:15px;text-align:center;font-size:14.5px;color:#5a5a5a;transform:rotate(-90deg)">21</div>
<div class="a t" style="left:290px;top:806.20px;width:80px;height:15px;text-align:center;font-size:14.5px;color:#5a5a5a;transform:rotate(-90deg)">22</div>
<div class="a t" style="left:290px;top:834.55px;width:80px;height:15px;text-align:center;font-size:14.5px;color:#5a5a5a;transform:rotate(-90deg)">23</div>
<div class="a t" style="left:290px;top:862.90px;width:80px;height:15px;text-align:center;font-size:14.5px;color:#5a5a5a;transform:rotate(-90deg)">24</div>
<div class="a t" style="left:290px;top:891.25px;width:80px;height:15px;text-align:center;font-size:14.5px;color:#5a5a5a;transform:rotate(-90deg)">25</div>
<div class="a" style="left:453px;top:159px;width:603px;height:756px;background:#bdbdbd"></div>
<div class="a" style="left:455px;top:161px;width:600px;height:754px;background:#777"></div>
<div class="a" style="left:457px;top:163px;width:597px;height:752px;background:#fff"></div>
<div class="a" style="left:1051px;top:163px;width:1px;height:752px;background:#b4b4b8"></div>
<div class="a" style="left:1054px;top:161px;width:1px;height:754px;background:#8a8a8a"></div>
<div class="a" style="left:1055px;top:160px;width:3px;height:755px;background:linear-gradient(90deg,#b3b3b3,#d8d8d8,#ebebeb)"></div>
<div class="a" style="left:484px;top:190px;width:2px;height:725px;background:#dadada"></div>
<div class="a" style="left:484px;top:190px;width:541px;height:2px;background:#dadada"></div>
<div class="a" style="left:1023px;top:190px;width:2px;height:725px;background:#dadada"></div>
<div class="a" style="left:1162px;top:144px;width:1px;height:771px;background:#fff"></div>
<div class="a" style="left:1170px;top:350px;width:11px;height:436px;background:#888"></div>
<div class="a" style="left:1188px;top:120px;width:1px;height:795px;background:#a0a0a0"></div>
<div class="a" style="left:1188px;top:559px;width:7px;height:73px;background:#6b6b6b"></div>
<svg style="left:1189px;top:591px" width="6" height="9" viewBox="0 0 6 9"><path d="M1 0v9l4.5-4.5z" fill="#ddd"/></svg>
<div class="a" style="left:1199px;top:125px;width:3px;height:3px;background:#222"></div>
<div class="a" style="left:1199px;top:131px;width:3px;height:3px;background:#222"></div>
<div class="a" style="left:1199px;top:137px;width:3px;height:3px;background:#222"></div>
<div class="a" style="left:1199px;top:143px;width:3px;height:3px;background:#222"></div>
<div class="a t" style="left:1209px;top:127px;font-size:18px;"><b style="-webkit-text-stroke:0.35px #000">属性</b></div>
<svg style="left:1623px;top:129px" width="12" height="12" viewBox="0 0 12 12"><path d="M0.5 0.5L11.5 11.5M11.5 0.5L0.5 11.5" stroke="#333" stroke-width="1.6"/></svg>
<div class="a" style="left:1197px;top:150px;width:442px;height:28px;background:#e1e1e1"></div>
<div class="a" style="left:1197px;top:152px;width:20px;height:20px;border:2px solid #8f8f8f;background:linear-gradient(#fdfdfd 50%,#e6e6e6 50%)"></div>
<div class="a" style="left:1200px;top:161px;width:14px;height:2px;background:#3a55a5"></div>
<div class="a t" style="left:1221px;top:154px;font-size:18px;"><b style="-webkit-text-stroke:0.35px #000">页面</b></div>
<svg style="left:1619px;top:156px" width="16" height="16" viewBox="0 0 16 16"><path d="M1 14V1h13" fill="none" stroke="#333" stroke-width="1.3"/><path d="M5 5l8.5 8.5M14 7.5v6.5H7.5" fill="none" stroke="#333" stroke-width="1.5"/></svg>
<div class="a t" style="left:1169px;top:190px;width:200px;text-align:right;font-size:18px">格式(<u style="border-color:#000">F</u>):</div>
<div class="a" style="left:1375px;top:184px;width:163px;height:30px;background:#fff;border:1px solid #7d8189"></div>
<div class="a" style="left:1511px;top:185px;width:26px;height:28px;background:#fbfbfb;border-left:1px solid #d6d6d6"></div>
<svg style="left:1518px;top:196px" width="11" height="6" viewBox="0 0 11 6"><path d="M0.5 0.5l5 5 5-5" fill="none" stroke="#444" stroke-width="1.1"/></svg>
<div class="a t" style="left:1377px;top:190px;font-size:18px;">A4</div>
<div class="a t" style="left:1169px;top:223px;width:200px;text-align:right;font-size:18px">方向:</div>
<div class="a" style="left:1375px;top:217px;width:163px;height:30px;background:#fff;border:1px solid #7d8189"></div>
<div class="a" style="left:1511px;top:218px;width:26px;height:28px;background:#fbfbfb;border-left:1px solid #d6d6d6"></div>
<svg style="left:1518px;top:229px" width="11" height="6" viewBox="0 0 11 6"><path d="M0.5 0.5l5 5 5-5" fill="none" stroke="#444" stroke-width="1.1"/></svg>
<div class="a t" style="left:1377px;top:223px;font-size:18px;">纵向</div>
<div class="a t" style="left:1169px;top:256px;width:200px;text-align:right;font-size:18px">背景:</div>
<div class="a" style="left:1375px;top:250px;width:163px;height:30px;background:#fff;border:1px solid #7d8189"></div>
<div class="a" style="left:1511px;top:251px;width:26px;height:28px;background:#fbfbfb;border-left:1px solid #d6d6d6"></div>
<svg style="left:1518px;top:262px" width="11" height="6" viewBox="0 0 11 6"><path d="M0.5 0.5l5 5 5-5" fill="none" stroke="#444" stroke-width="1.1"/></svg>
<div class="a t" style="left:1377px;top:256px;font-size:18px;">无</div>
<div class="a" style="left:1376px;top:284px;width:161px;height:36px;background:#fdfdfd;border:1px solid #cfcfcf;border-radius:4px"></div>
<div class="a t" style="left:1376px;top:292px;width:161px;text-align:center;font-size:18px">插入图像...</div>
<div class="a t" style="left:1169px;top:330px;width:200px;text-align:right;font-size:18px">边距:</div>
<div class="a" style="left:1375px;top:324px;width:163px;height:30px;background:#fff;border:1px solid #7d8189"></div>
<div class="a" style="left:1511px;top:325px;width:26px;height:28px;background:#fbfbfb;border-left:1px solid #d6d6d6"></div>
<svg style="left:1518px;top:336px" width="11" height="6" viewBox="0 0 11 6"><path d="M0.5 0.5l5 5 5-5" fill="none" stroke="#444" stroke-width="1.1"/></svg>
<div class="a t" style="left:1377px;top:330px;font-size:18px;">正常 (1.90 厘米)</div>
<div class="a t" style="left:1169px;top:363px;width:200px;text-align:right;font-size:18px">母版页面:</div>
<div class="a" style="left:1375px;top:357px;width:163px;height:30px;background:#fff;border:1px solid #7d8189"></div>
<div class="a" style="left:1511px;top:358px;width:26px;height:28px;background:#fbfbfb;border-left:1px solid #d6d6d6"></div>
<svg style="left:1518px;top:369px" width="11" height="6" viewBox="0 0 11 6"><path d="M0.5 0.5l5 5 5-5" fill="none" stroke="#444" stroke-width="1.1"/></svg>
<div class="a t" style="left:1377px;top:363px;font-size:18px;">默认</div>
<svg style="left:1657px;top:132px" width="16" height="12" viewBox="0 0 16 12"><path d="M0 1.5h15M0 10.5h15" stroke="#222" stroke-width="1"/><path d="M0 6h15" stroke="#222" stroke-width="1.6"/></svg>
<div class="a" style="left:1641px;top:155px;width:50px;height:46px;background:#cce8ff;border:1px solid #99d1ff;border-radius:4px"></div>
<svg style="left:1649px;top:163px" width="31" height="30" viewBox="0 0 31 30"><rect x="1" y="1" width="29" height="28" fill="#fafafa" stroke="#333" stroke-width="1.8"/><rect x="1" y="1" width="29" height="5" fill="#555"/><path d="M6 14.5h19M6 20.5h19" stroke="#333" stroke-width="1"/><rect x="15.5" y="12" width="4" height="5" fill="#1e88d6"/><rect x="10.5" y="18" width="4" height="5" fill="#1e88d6"/></svg>
<svg style="left:1649px;top:209px" width="33" height="34" viewBox="0 0 33 34"><path d="M1.5 24L8 1.5h4.5L19 24M4.5 16h11" fill="none" stroke="#2a2a2a" stroke-width="2.8"/><path d="M17 22L30 9.5c1.5-1.5 2.5 0 1.5 1.5L20 24z" fill="#fff" stroke="#444" stroke-width="1.3"/><path d="M8 32c0-5 4-8 9-8l3 1.5c0 4-3 6.5-7 6.5z" fill="#6fa8dc" stroke="#0b5cb0" stroke-width="1.6"/></svg>
<svg style="left:1648px;top:256px" width="34" height="32" viewBox="0 0 34 32"><path d="M1.5 28.5V1.5h9.5l3 3.5h15.5v6" fill="#fafafa" stroke="#e8822e" stroke-width="1.8"/><path d="M4 11.5h28.5l-3 17H1.5z" fill="#f8d98a" stroke="#e8822e" stroke-width="1.8"/><rect x="12.5" y="12" width="18.5" height="18.5" fill="#fff" stroke="#222" stroke-width="1.8"/><path d="M13.5 29.5v-5l4-3.5 3.5 2.5 5-4.5 4 3.5v7z" fill="#82b8ea" stroke="#1e78c8" stroke-width="1.1"/><circle cx="18.5" cy="16.5" r="1.8" fill="#f6a35b"/></svg>
<svg style="left:1649px;top:303px" width="31" height="31" viewBox="0 0 31 31"><circle cx="15.5" cy="15.5" r="14.5" fill="#fafafa" stroke="#555" stroke-width="1.6"/><path d="M22 9L17 20 9 22l5-11z" fill="#1e88d6"/><circle cx="15.5" cy="15.5" r="2.5" fill="#fff"/></svg>
<svg style="left:1649px;top:350px" width="31" height="32" viewBox="0 0 31 32"><path d="M15.5 1L30 16 15.5 31 1 16z" fill="#fafafa" stroke="#555" stroke-width="1.5"/></svg>
</body></html>
